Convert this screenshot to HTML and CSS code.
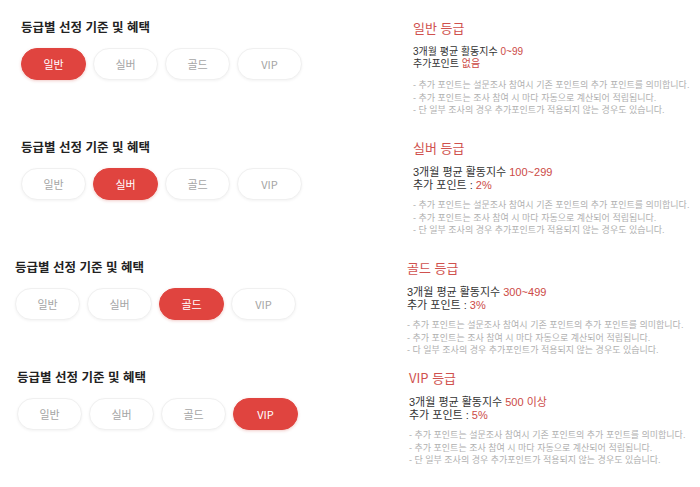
FILE: index.html
```html
<!DOCTYPE html>
<html lang="ko">
<head>
    <meta charset="UTF-8">
    <meta name="viewport" content="width=device-width, initial-scale=1.0">
    <title>등급별 선정 기준 및 혜택</title>
    <link rel="stylesheet" href="styles.css">
</head>
<body>

    <!-- 일반 -->
    <div class="panel panel-basic">
        <div class="grade-select">
            <h2 class="title">등급별 선정 기준 및 혜택</h2>
            <div class="tabs">
                <span class="tab active">일반</span>
                <span class="tab">실버</span>
                <span class="tab">골드</span>
                <span class="tab">VIP</span>
            </div>
        </div>
        <div class="grade-info">
            <h3>일반 등급</h3>
            <p class="criteria">3개월 평균 활동지수 <em>0~99</em><br>추가포인트 <em>없음</em></p>
            <ul class="notes">
                <li>- 추가 포인트는 설문조사 참여시 기존 포인트의 추가 포인트를 의미합니다.</li>
                <li>- 추가 포인트는 조사 참여 시 마다 자동으로 계산되어 적립됩니다.</li>
                <li>- 단 일부 조사의 경우 추가포인트가 적용되지 않는 경우도 있습니다.</li>
            </ul>
        </div>
    </div>

    <!-- 실버 -->
    <div class="panel">
        <div class="grade-select">
            <h2 class="title">등급별 선정 기준 및 혜택</h2>
            <div class="tabs">
                <span class="tab">일반</span>
                <span class="tab active">실버</span>
                <span class="tab">골드</span>
                <span class="tab">VIP</span>
            </div>
        </div>
        <div class="grade-info">
            <h3>실버 등급</h3>
            <p class="criteria">3개월 평균 활동지수 <em>100~299</em><br>추가 포인트 : <em>2%</em></p>
            <ul class="notes">
                <li>- 추가 포인트는 설문조사 참여시 기존 포인트의 추가 포인트를 의미합니다.</li>
                <li>- 추가 포인트는 조사 참여 시 마다 자동으로 계산되어 적립됩니다.</li>
                <li>- 단 일부 조사의 경우 추가포인트가 적용되지 않는 경우도 있습니다.</li>
            </ul>
        </div>
    </div>

    <!-- 골드 -->
    <div class="panel panel-gold">
        <div class="grade-select">
            <h2 class="title">등급별 선정 기준 및 혜택</h2>
            <div class="tabs">
                <span class="tab">일반</span>
                <span class="tab">실버</span>
                <span class="tab active">골드</span>
                <span class="tab">VIP</span>
            </div>
        </div>
        <div class="grade-info">
            <h3>골드 등급</h3>
            <p class="criteria">3개월 평균 활동지수 <em>300~499</em><br>추가 포인트 : <em>3%</em></p>
            <ul class="notes">
                <li>- 추가 포인트는 설문조사 참여시 기존 포인트의 추가 포인트를 의미합니다.</li>
                <li>- 추가 포인트는 조사 참여 시 마다 자동으로 계산되어 적립됩니다.</li>
                <li>- 다 일부 조사의 경우 추가포인트가 적용되지 않는 경우도 있습니다.</li>
            </ul>
        </div>
    </div>

    <!-- VIP -->
    <div class="panel panel-vip">
        <div class="grade-select">
            <h2 class="title">등급별 선정 기준 및 혜택</h2>
            <div class="tabs">
                <span class="tab">일반</span>
                <span class="tab">실버</span>
                <span class="tab">골드</span>
                <span class="tab active">VIP</span>
            </div>
        </div>
        <div class="grade-info">
            <h3>VIP 등급</h3>
            <p class="criteria">3개월 평균 활동지수 <em>500 이상</em><br>추가 포인트 : <em>5%</em></p>
            <ul class="notes">
                <li>- 추가 포인트는 설문조사 참여시 기존 포인트의 추가 포인트를 의미합니다.</li>
                <li>- 추가 포인트는 조사 참여 시 마다 자동으로 계산되어 적립됩니다.</li>
                <li>- 단 일부 조사의 경우 추가포인트가 적용되지 않는 경우도 있습니다.</li>
            </ul>
        </div>
    </div>

</body>
</html>
```

FILE: styles.css
```css
body {
    font-family: 'Noto Sans CJK KR', 'Noto Sans', sans-serif;
    background-color: #fff;
    color: #222;
    margin: 0;
    padding: 0;
}
.panel {
    display: grid;
    grid-template-columns: 392px 1fr;
    height: 120px;
    box-sizing: border-box;
    padding: 18px 0 0 21px;
}
.panel-gold {
    padding-left: 15px;
}
.panel-vip {
    height: 127px;
    padding: 8px 0 0 17px;
}
.title {
    margin: 0 0 12px;
    font-size: 12.5px;
    line-height: 18px;
    font-weight: bold;
    color: #222;
}
.tabs {
    display: flex;
    gap: 7px;
}
.tab {
    display: flex;
    align-items: center;
    justify-content: center;
    width: 65px;
    height: 32px;
    box-sizing: border-box;
    border: 1px solid #f0f0f0;
    border-radius: 16px;
    box-shadow: 0 1px 3px rgba(0, 0, 0, 0.05);
    font-size: 11px;
    color: #a5a5a5;
    background-color: #fff;
}
.tab.active {
    background-color: #e0443f;
    border-color: #e0443f;
    color: #fff;
    box-shadow: 0 1px 3px rgba(200, 50, 40, 0.25);
}
.grade-info h3 {
    margin: 1px 0 9px;
    font-size: 13px;
    line-height: 18px;
    font-weight: 400;
    color: #d0514e;
}
.criteria {
    margin: 0 0 8px;
    font-family: 'Liberation Sans', 'Noto Sans CJK KR', sans-serif;
    font-size: 11px;
    line-height: 12.5px;
    color: #333;
}
.panel-basic .criteria {
    margin-bottom: 10px;
    font-size: 10px;
    line-height: 11.5px;
}
.criteria em {
    font-style: normal;
    color: #cc4a46;
}
.notes {
    list-style: none;
    margin: 0;
    padding: 0;
    font-family: 'Liberation Sans', 'Noto Sans CJK KR', sans-serif;
    font-size: 9px;
    line-height: 12.5px;
    color: #b0b0b0;
    white-space: nowrap;
}
```
